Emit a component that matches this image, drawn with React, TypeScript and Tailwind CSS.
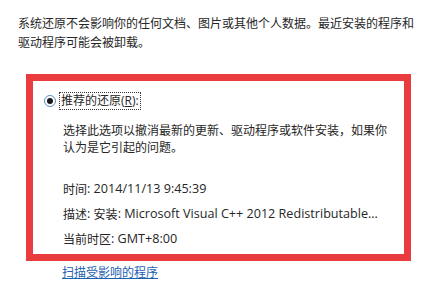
const Lat = ({ children }: { children: React.ReactNode }) => (
  <span className="text-[12.6px]">{children}</span>
)

export default function App() {
  return (
    <div
      className="w-[434px] h-[286px] bg-white overflow-hidden pl-[18px] pt-[14px] text-[12px] text-[#262626]"
      style={{ fontFamily: '"Open Sans", "Noto Sans CJK SC", sans-serif' }}
    >
      <p className="w-[400px] leading-[19px]">
        系统还原不会影响你的任何文档、图片或其他个人数据。最近安装的程序和驱动程序可能会被卸载。
      </p>

      <div className="ml-[8px] mt-[22px] w-[385px] h-[187px] border-[7px] border-[#ea3b3f] pt-[11px] pl-[11px]">
        <div className="flex items-center h-[18px]">
          <span className="w-[12px] h-[12px] rounded-full border border-[#5b8fc8] bg-white flex items-center justify-center">
            <span className="w-[6px] h-[6px] rounded-full bg-[#1a1a1a]" />
          </span>
          <span className="ml-[3px] px-[1px] h-[18px] flex items-center border border-dotted border-[#333]">
            推荐的还原(<span className="underline">R</span>):
          </span>
        </div>

        <div className="ml-[19px] mt-[12px]">
          <p className="w-[330px] leading-[17px]">
            选择此选项以撤消最新的更新、驱动程序或软件安装，如果你认为是它引起的问题。
          </p>
          <div className="mt-[21px]">
            <div className="h-[25px] flex items-center whitespace-pre">
              时间<Lat>: 2014/11/13 9:45:39</Lat>
            </div>
            <div className="h-[25px] flex items-center whitespace-pre">
              描述<Lat>: </Lat>安装<Lat>: Microsoft Visual C++ 2012 Redistributable...</Lat>
            </div>
            <div className="h-[25px] flex items-center whitespace-pre">
              当前时区<Lat>: GMT+8:00</Lat>
            </div>
          </div>
        </div>
      </div>

      <div className="ml-[44px] mt-[3px] h-[18px] flex items-center">
        <span className="text-[#1c5fb0] underline">扫描受影响的程序</span>
      </div>
    </div>
  )
}
